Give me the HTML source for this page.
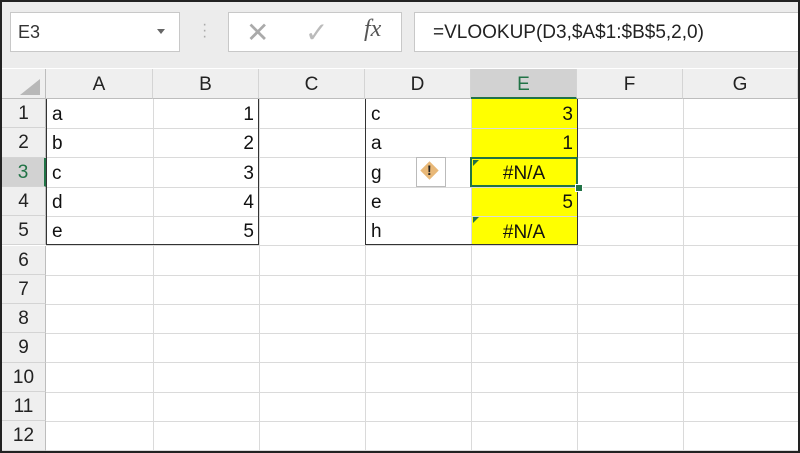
<!DOCTYPE html><html><head><style>
body{margin:0;width:800px;height:453px;overflow:hidden;background:#fff;font-family:"Liberation Sans",sans-serif}
.a{position:absolute}
#f{position:absolute;left:0;top:0;width:796px;height:449px;border:2px solid #222;background:#fff;overflow:hidden}
.bar{left:0;top:0;width:796px;height:66px;background:#ececec}
.box{background:#fff;border:1px solid #c8c8c8}
.ch{top:67px;height:30px;background:#efefef;border-right:1px solid #d4d4d4;border-bottom:1px solid #bdbdbd;text-align:center;line-height:32px;font-size:19px;color:#222;box-sizing:border-box}
.rh{left:0;width:44px;background:#efefef;border-bottom:1px solid #d4d4d4;border-right:1px solid #bdbdbd;text-align:center;font-size:19px;color:#222;box-sizing:border-box}
.hl{left:44px;width:752px;height:1px;background:#dadada}
.vl{top:97px;width:1px;height:352px;background:#dadada}
.t{font-size:19px;color:#111}
</style></head><body><div id="f">
<div class="a bar"></div>
<div class="a box" style="left:8px;top:10px;width:168px;height:38px"></div>
<div class="a t" style="left:16px;top:20px;font-size:18px;color:#333">E3</div>
<div class="a" style="left:155px;top:27px;border:4px solid transparent;border-top:5px solid #666"></div>
<div class="a" style="left:200px;top:20px;color:#aaa;font-size:16px;line-height:6px">·<br>·<br>·</div>
<div class="a box" style="left:226px;top:10px;width:172px;height:38px"></div>
<div class="a" style="left:244px;top:14px;font-size:28px;color:#aaa">✕</div>
<div class="a" style="left:303px;top:14px;font-size:28px;color:#bbb">✓</div>
<div class="a" style="left:362px;top:14px;font-size:24px;color:#555;font-family:'Liberation Serif',serif;font-style:italic">fx</div>
<div class="a box" style="left:412px;top:10px;width:384px;height:38px"></div>
<div class="a t" style="left:431px;top:20px;font-size:19px;color:#222">=VLOOKUP(D3,$A$1:$B$5,2,0)</div>
<div class="a ch" style="left:0;width:44px;border-right:1px solid #bdbdbd"></div>
<div class="a" style="left:18px;top:77px;width:0;height:0;border-left:20px solid transparent;border-bottom:16px solid #b8b8b8"></div>
<div class="a ch" style="left:44px;width:107px">A</div>
<div class="a ch" style="left:151px;width:106px">B</div>
<div class="a ch" style="left:257px;width:106px">C</div>
<div class="a ch" style="left:363px;width:106px">D</div>
<div class="a ch" style="left:469px;width:106px;background:#d2d2d2;color:#217346;border-bottom:2px solid #217346">E</div>
<div class="a ch" style="left:575px;width:106px">F</div>
<div class="a ch" style="left:681px;width:115px">G</div>
<div class="a" style="left:469px;top:97px;width:106px;height:147px;background:#ffff00"></div>
<div class="a vl" style="left:151px"></div><div class="a vl" style="left:257px"></div><div class="a vl" style="left:363px"></div><div class="a vl" style="left:469px"></div><div class="a vl" style="left:575px"></div><div class="a vl" style="left:681px"></div>
<div id="rows"></div>
<script>
var h='';for(var i=0;i<12;i++){var y=97+i*29.3;h+='<div class="a rh" style="top:'+y+'px;height:29.3px;line-height:29px;'+(i==2?'background:#d2d2d2;color:#217346;border-right:2px solid #217346':'')+'">'+(i+1)+'</div><div class="a hl" style="top:'+(y+29)+'px"></div>'}
document.getElementById('rows').innerHTML=h;
</script>
<div class="a" style="left:44px;top:97px;width:213px;height:146px;border-right:1.5px solid #333;border-bottom:1.5px solid #333;border-left:1.5px solid #333;box-sizing:border-box"></div>
<div class="a" style="left:363px;top:97px;width:213px;height:146px;border-right:1.5px solid #333;border-bottom:1.5px solid #333;border-left:1.5px solid #333;box-sizing:border-box"></div>
<div class="a" style="left:468px;top:155px;width:108px;height:30px;border:2px solid #217346;box-sizing:border-box"></div>
<div class="a" style="left:573px;top:182px;width:6px;height:6px;background:#217346;border:1px solid #fff"></div>
<div class="a" style="left:471px;top:158px;border-top:6px solid #217346;border-right:6px solid transparent"></div>
<div class="a" style="left:471px;top:215px;border-top:6px solid #217346;border-right:6px solid transparent"></div>
<div class="a" style="left:414px;top:155px;width:30px;height:30px;border:1px solid #bbb;background:#fff;box-sizing:border-box"></div>
<div class="a" style="left:421px;top:162px;width:13px;height:13px;background:#e8b878;transform:rotate(45deg)"></div>
<div class="a" style="left:425px;top:160px;font-size:14px;font-weight:bold;color:#222">!</div>
<div class="a t" style="left:50px;top:98px;line-height:29.3px">a<br>b<br>c<br>d<br>e</div>
<div class="a t" style="left:160px;top:98px;width:92px;text-align:right;line-height:29.3px">1<br>2<br>3<br>4<br>5</div>
<div class="a t" style="left:369px;top:98px;line-height:29.3px">c<br>a<br>g<br>e<br>h</div>
<div class="a t" style="left:475px;top:98px;width:96px;text-align:right;line-height:29.3px">3<br>1<br>&nbsp;<br>5<br>&nbsp;</div>
<div class="a t" style="left:469px;top:157px;width:106px;text-align:center;line-height:29.3px">#N/A<br><br>#N/A</div>
</div></body></html>
